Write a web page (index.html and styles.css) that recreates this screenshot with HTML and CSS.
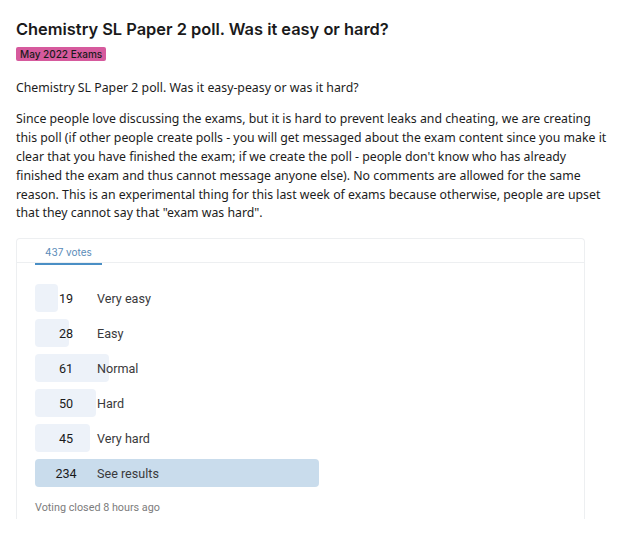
FILE: index.html
```html
<!DOCTYPE html>
<html lang="en">
<head>
  <meta charset="UTF-8" />
  <meta name="viewport" content="width=device-width, initial-scale=1.0" />
  <title>Chemistry SL Paper 2 poll</title>
  <link rel="stylesheet" href="styles.css">
</head>
<body>
  <div class="post">
    <h1 class="post-title">Chemistry SL Paper 2 poll. Was it easy or hard?</h1>
    <span class="flair">May 2022 Exams</span>

    <div class="post-body">
      <p>Chemistry SL Paper 2 poll. Was it easy-peasy or was it hard?</p>
      <p>Since people love discussing the exams, but it is hard to prevent leaks and cheating, we are creating<br>
        this poll (if other people create polls - you will get messaged about the exam content since you make it<br>
        clear that you have finished the exam; if we create the poll - people don't know who has already<br>
        finished the exam and thus cannot message anyone else). No comments are allowed for the same<br>
        reason. This is an experimental thing for this last week of exams because otherwise, people are upset<br>
        that they cannot say that "exam was hard".</p>
    </div>

    <div class="poll">
      <div class="poll-tabs">
        <span class="poll-tab">437 votes</span>
      </div>
      <div class="poll-body">
        <div class="poll-option">
          <div class="poll-bar" style="width: 4.35%"></div>
          <span class="poll-count">19</span>
          <span class="poll-label">Very easy</span>
        </div>
        <div class="poll-option">
          <div class="poll-bar" style="width: 6.41%"></div>
          <span class="poll-count">28</span>
          <span class="poll-label">Easy</span>
        </div>
        <div class="poll-option">
          <div class="poll-bar" style="width: 13.96%"></div>
          <span class="poll-count">61</span>
          <span class="poll-label">Normal</span>
        </div>
        <div class="poll-option">
          <div class="poll-bar" style="width: 11.44%"></div>
          <span class="poll-count">50</span>
          <span class="poll-label">Hard</span>
        </div>
        <div class="poll-option">
          <div class="poll-bar" style="width: 10.30%"></div>
          <span class="poll-count">45</span>
          <span class="poll-label">Very hard</span>
        </div>
        <div class="poll-option winner">
          <div class="poll-bar" style="width: 53.55%"></div>
          <span class="poll-count">234</span>
          <span class="poll-label">See results</span>
        </div>
        <div class="poll-footer">Voting closed 8 hours ago</div>
      </div>
    </div>
  </div>
</body>
</html>
```

FILE: styles.css
```css
body {
  margin: 0;
  background: #fff;
  color: #1c1c1c;
  font-family: "Noto Sans", "Open Sans", sans-serif;
}
.post {
  padding: 19px 6px 0 16px;
}
.post-title {
  margin: 0;
  font-family: Inter, Roboto, sans-serif;
  font-size: 16.4px;
  font-weight: 600;
  line-height: 20px;
  color: #1a1a1b;
}
.flair {
  display: inline-block;
  margin-top: 8px;
  padding: 0 4px;
  height: 14px;
  line-height: 14px;
  font-family: Inter, Roboto, sans-serif;
  font-size: 10px;
  font-weight: 500;
  color: #1a1a1b;
  background: #d65a9d;
  border-radius: 2px;
}
.post-body {
  margin-top: 16px;
  font-size: 12.3px;
  line-height: 18.9px;
}
.post-body p {
  margin: 0 0 12px;
}
.poll {
  width: 567px;
  margin-top: 15px;
  border: 1px solid #edeff1;
  border-bottom: 0;
  border-radius: 4px 4px 0 0;
}
.poll-tabs {
  height: 23px;
  padding: 0 18px;
  border-bottom: 1px solid #edeff1;
}
.poll-tab {
  display: inline-block;
  height: 21px;
  padding: 0 10px;
  line-height: 21px;
  font-family: Inter, Roboto, sans-serif;
  font-size: 10px;
  color: #5b8bb8;
  border-bottom: 2px solid #4a8fc5;
}
.poll-body {
  padding: 21px 18px 3px;
}
.poll-option {
  position: relative;
  display: flex;
  align-items: center;
  height: 28px;
  margin-bottom: 7px;
  font-family: Roboto, Inter, sans-serif;
  font-size: 12.6px;
}
.poll-bar {
  position: absolute;
  left: 0;
  top: 0;
  bottom: 0;
  background: #edf2f9;
  border-radius: 4px;
}
.winner .poll-bar {
  background: #c9dcec;
}
.poll-count {
  position: relative;
  width: 62px;
  text-align: center;
  color: #1a1a1b;
}
.poll-label {
  position: relative;
  color: #3a3a3c;
}
.poll-footer {
  margin-top: 13px;
  font-family: Roboto, Inter, sans-serif;
  font-size: 10.8px;
  line-height: 16px;
  color: #7c7c7c;
}
```
